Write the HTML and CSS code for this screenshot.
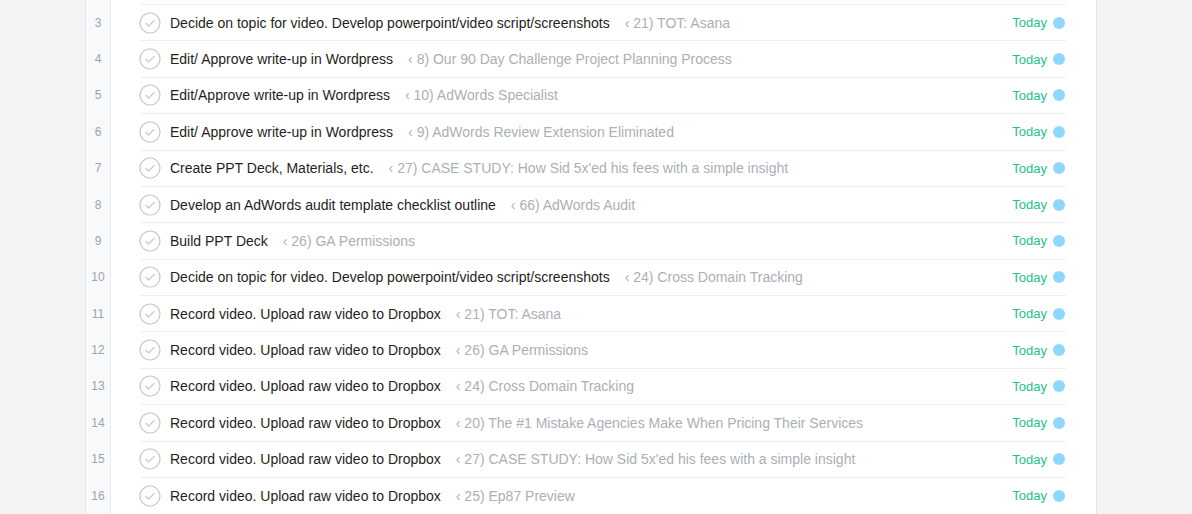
FILE: index.html
```html
<!DOCTYPE html>
<html>
<head>
<meta charset="utf-8">
<link rel="stylesheet" href="styles.css">
</head>
<body>
<div class="page">
  <div class="side"></div>
  <div class="panel">
    <div class="list">
      <div class="row"><div class="num">3</div><div class="task"><span class="check"><svg viewBox="0 0 22 22" width="22" height="22"><circle cx="11" cy="11" r="10" fill="none" stroke="#c3c8cd" stroke-width="1.2"/><path d="M6.8 11.3 L9.6 14 L15.2 8.4" fill="none" stroke="#c3c8cd" stroke-width="1.2" stroke-linecap="round" stroke-linejoin="round"/></svg></span><span class="name">Decide on topic for video. Develop powerpoint/video script/screenshots</span><span class="proj">‹ 21) TOT: Asana</span><span class="due">Today</span><span class="dot"></span></div></div>
      <div class="row"><div class="num">4</div><div class="task"><span class="check"><svg viewBox="0 0 22 22" width="22" height="22"><circle cx="11" cy="11" r="10" fill="none" stroke="#c3c8cd" stroke-width="1.2"/><path d="M6.8 11.3 L9.6 14 L15.2 8.4" fill="none" stroke="#c3c8cd" stroke-width="1.2" stroke-linecap="round" stroke-linejoin="round"/></svg></span><span class="name">Edit/ Approve write-up in Wordpress</span><span class="proj">‹ 8) Our 90 Day Challenge Project Planning Process</span><span class="due">Today</span><span class="dot"></span></div></div>
      <div class="row"><div class="num">5</div><div class="task"><span class="check"><svg viewBox="0 0 22 22" width="22" height="22"><circle cx="11" cy="11" r="10" fill="none" stroke="#c3c8cd" stroke-width="1.2"/><path d="M6.8 11.3 L9.6 14 L15.2 8.4" fill="none" stroke="#c3c8cd" stroke-width="1.2" stroke-linecap="round" stroke-linejoin="round"/></svg></span><span class="name">Edit/Approve write-up in Wordpress</span><span class="proj">‹ 10) AdWords Specialist</span><span class="due">Today</span><span class="dot"></span></div></div>
      <div class="row"><div class="num">6</div><div class="task"><span class="check"><svg viewBox="0 0 22 22" width="22" height="22"><circle cx="11" cy="11" r="10" fill="none" stroke="#c3c8cd" stroke-width="1.2"/><path d="M6.8 11.3 L9.6 14 L15.2 8.4" fill="none" stroke="#c3c8cd" stroke-width="1.2" stroke-linecap="round" stroke-linejoin="round"/></svg></span><span class="name">Edit/ Approve write-up in Wordpress</span><span class="proj">‹ 9) AdWords Review Extension Eliminated</span><span class="due">Today</span><span class="dot"></span></div></div>
      <div class="row"><div class="num">7</div><div class="task"><span class="check"><svg viewBox="0 0 22 22" width="22" height="22"><circle cx="11" cy="11" r="10" fill="none" stroke="#c3c8cd" stroke-width="1.2"/><path d="M6.8 11.3 L9.6 14 L15.2 8.4" fill="none" stroke="#c3c8cd" stroke-width="1.2" stroke-linecap="round" stroke-linejoin="round"/></svg></span><span class="name">Create PPT Deck, Materials, etc.</span><span class="proj">‹ 27) CASE STUDY: How Sid 5x'ed his fees with a simple insight</span><span class="due">Today</span><span class="dot"></span></div></div>
      <div class="row"><div class="num">8</div><div class="task"><span class="check"><svg viewBox="0 0 22 22" width="22" height="22"><circle cx="11" cy="11" r="10" fill="none" stroke="#c3c8cd" stroke-width="1.2"/><path d="M6.8 11.3 L9.6 14 L15.2 8.4" fill="none" stroke="#c3c8cd" stroke-width="1.2" stroke-linecap="round" stroke-linejoin="round"/></svg></span><span class="name">Develop an AdWords audit template checklist outline</span><span class="proj">‹ 66) AdWords Audit</span><span class="due">Today</span><span class="dot"></span></div></div>
      <div class="row"><div class="num">9</div><div class="task"><span class="check"><svg viewBox="0 0 22 22" width="22" height="22"><circle cx="11" cy="11" r="10" fill="none" stroke="#c3c8cd" stroke-width="1.2"/><path d="M6.8 11.3 L9.6 14 L15.2 8.4" fill="none" stroke="#c3c8cd" stroke-width="1.2" stroke-linecap="round" stroke-linejoin="round"/></svg></span><span class="name">Build PPT Deck</span><span class="proj">‹ 26) GA Permissions</span><span class="due">Today</span><span class="dot"></span></div></div>
      <div class="row"><div class="num">10</div><div class="task"><span class="check"><svg viewBox="0 0 22 22" width="22" height="22"><circle cx="11" cy="11" r="10" fill="none" stroke="#c3c8cd" stroke-width="1.2"/><path d="M6.8 11.3 L9.6 14 L15.2 8.4" fill="none" stroke="#c3c8cd" stroke-width="1.2" stroke-linecap="round" stroke-linejoin="round"/></svg></span><span class="name">Decide on topic for video. Develop powerpoint/video script/screenshots</span><span class="proj">‹ 24) Cross Domain Tracking</span><span class="due">Today</span><span class="dot"></span></div></div>
      <div class="row"><div class="num">11</div><div class="task"><span class="check"><svg viewBox="0 0 22 22" width="22" height="22"><circle cx="11" cy="11" r="10" fill="none" stroke="#c3c8cd" stroke-width="1.2"/><path d="M6.8 11.3 L9.6 14 L15.2 8.4" fill="none" stroke="#c3c8cd" stroke-width="1.2" stroke-linecap="round" stroke-linejoin="round"/></svg></span><span class="name">Record video. Upload raw video to Dropbox</span><span class="proj">‹ 21) TOT: Asana</span><span class="due">Today</span><span class="dot"></span></div></div>
      <div class="row"><div class="num">12</div><div class="task"><span class="check"><svg viewBox="0 0 22 22" width="22" height="22"><circle cx="11" cy="11" r="10" fill="none" stroke="#c3c8cd" stroke-width="1.2"/><path d="M6.8 11.3 L9.6 14 L15.2 8.4" fill="none" stroke="#c3c8cd" stroke-width="1.2" stroke-linecap="round" stroke-linejoin="round"/></svg></span><span class="name">Record video. Upload raw video to Dropbox</span><span class="proj">‹ 26) GA Permissions</span><span class="due">Today</span><span class="dot"></span></div></div>
      <div class="row"><div class="num">13</div><div class="task"><span class="check"><svg viewBox="0 0 22 22" width="22" height="22"><circle cx="11" cy="11" r="10" fill="none" stroke="#c3c8cd" stroke-width="1.2"/><path d="M6.8 11.3 L9.6 14 L15.2 8.4" fill="none" stroke="#c3c8cd" stroke-width="1.2" stroke-linecap="round" stroke-linejoin="round"/></svg></span><span class="name">Record video. Upload raw video to Dropbox</span><span class="proj">‹ 24) Cross Domain Tracking</span><span class="due">Today</span><span class="dot"></span></div></div>
      <div class="row"><div class="num">14</div><div class="task"><span class="check"><svg viewBox="0 0 22 22" width="22" height="22"><circle cx="11" cy="11" r="10" fill="none" stroke="#c3c8cd" stroke-width="1.2"/><path d="M6.8 11.3 L9.6 14 L15.2 8.4" fill="none" stroke="#c3c8cd" stroke-width="1.2" stroke-linecap="round" stroke-linejoin="round"/></svg></span><span class="name">Record video. Upload raw video to Dropbox</span><span class="proj">‹ 20) The #1 Mistake Agencies Make When Pricing Their Services</span><span class="due">Today</span><span class="dot"></span></div></div>
      <div class="row"><div class="num">15</div><div class="task"><span class="check"><svg viewBox="0 0 22 22" width="22" height="22"><circle cx="11" cy="11" r="10" fill="none" stroke="#c3c8cd" stroke-width="1.2"/><path d="M6.8 11.3 L9.6 14 L15.2 8.4" fill="none" stroke="#c3c8cd" stroke-width="1.2" stroke-linecap="round" stroke-linejoin="round"/></svg></span><span class="name">Record video. Upload raw video to Dropbox</span><span class="proj">‹ 27) CASE STUDY: How Sid 5x'ed his fees with a simple insight</span><span class="due">Today</span><span class="dot"></span></div></div>
      <div class="row"><div class="num">16</div><div class="task"><span class="check"><svg viewBox="0 0 22 22" width="22" height="22"><circle cx="11" cy="11" r="10" fill="none" stroke="#c3c8cd" stroke-width="1.2"/><path d="M6.8 11.3 L9.6 14 L15.2 8.4" fill="none" stroke="#c3c8cd" stroke-width="1.2" stroke-linecap="round" stroke-linejoin="round"/></svg></span><span class="name">Record video. Upload raw video to Dropbox</span><span class="proj">‹ 25) Ep87 Preview</span><span class="due">Today</span><span class="dot"></span></div></div>
    </div>
  </div>
  <div class="side"></div>
</div>
</body>
</html>
```

FILE: styles.css
```css
html, body {
  margin: 0;
  padding: 0;
  height: 100%;
  overflow: hidden;
  background: #f1f3f5;
  font-family: "Liberation Sans", Arial, sans-serif;
}
.page {
  display: flex;
  height: 514px;
}
.side {
  flex: 1;
  background: #f1f3f5;
}
.side:first-child {
  flex: 0 0 85px;
  border-right: 1px solid #e4e7ea;
}
.side:last-child {
  border-left: 1px solid #e1e4e7;
}
.panel {
  flex: 0 0 1010px;
  background: #fff;
  display: flex;
  flex-direction: column;
  overflow: hidden;
  background-image: linear-gradient(to right, #f8f9fa 0, #f8f9fa 24px, #e9ecee 24px, #e9ecee 25px, #fff 25px);
}
.list {
  padding-top: 4px;
  display: flex;
  flex-direction: column;
}
.row {
  display: flex;
  height: 36.38px;
  flex: 0 0 36.38px;
}
.num {
  flex: 0 0 24px;
  display: flex;
  align-items: center;
  justify-content: center;
  font-size: 12px;
  color: #9ea4aa;
  padding-top: 1px;
}
.task {
  flex: 0 0 926px;
  margin-left: 30px;
  border-top: 1px solid #eceef0;
  display: flex;
  align-items: center;
  box-sizing: border-box;
}
.check {
  flex: 0 0 22px;
  height: 22px;
  margin-left: -1px;
  margin-right: 9px;
  display: flex;
}
.name {
  font-size: 14px;
  color: #1e1f21;
  white-space: nowrap;
}
.proj {
  font-size: 14px;
  color: #aab0b7;
  margin-left: 15px;
  white-space: nowrap;
  flex: 1;
}
.due {
  font-size: 13px;
  color: #25c08f;
  margin-right: 6px;
}
.dot {
  flex: 0 0 12px;
  height: 12px;
  border-radius: 50%;
  background: #8ed8ff;
  margin-right: 1px;
}
```
